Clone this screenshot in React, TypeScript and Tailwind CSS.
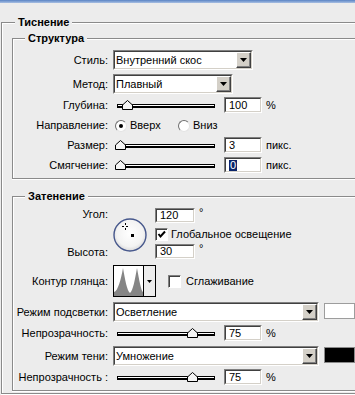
import React from 'react';

// Диалог "Стиль слоя" -> Тиснение (Photoshop, классическая тема Windows)

function Label({ children }: { children: React.ReactNode }) {
  return <div className="w-[95px] shrink-0 text-right leading-[13px] whitespace-nowrap">{children}</div>;
}

function DropButton() {
  return (
    <div className="w-[15px] h-full shrink-0 flex items-center justify-center bg-[#d4d0c8] border border-t-white border-l-white border-b-[#404040] border-r-[#404040] shadow-[inset_-1px_-1px_0_#808080]">
      <svg width="7" height="4" viewBox="0 0 7 4">
        <polygon points="0,0 7,0 3.5,4" fill="#000" />
      </svg>
    </div>
  );
}

function Select({ value, width }: { value: string; width: string }) {
  return (
    <div className={`${width} h-[20px] shrink-0 flex border border-[#808080] border-b-white border-r-white`}>
      <div className="flex-1 flex border border-[#404040] border-b-[#d4d0c8] border-r-[#d4d0c8] bg-white">
        <span className="flex-1 pl-[1px] text-[11px] leading-[16px] whitespace-nowrap overflow-hidden">{value}</span>
        <DropButton />
      </div>
    </div>
  );
}

function Field({ value, width = 'w-[38px]', height = 'h-[16px]', selected = false }: { value: string; width?: string; height?: string; selected?: boolean }) {
  return (
    <div className={`${width} ${height} shrink-0 border border-[#808080] border-b-white border-r-white`}>
      <div className="h-full border border-[#404040] border-b-[#d4d0c8] border-r-[#d4d0c8] bg-white flex items-center pl-[3px] leading-[11px]">
        {selected ? <span className="bg-[#0a246a] text-white px-[1px]">{value}</span> : value}
      </div>
    </div>
  );
}

function Thumb({ left }: { left: number }) {
  return (
    <svg className="absolute top-[3px]" style={{ left }} width="11" height="10" viewBox="0 0 11 10">
      <path d="M5.5 0.5 L10.5 5 L10.5 9.5 L0.5 9.5 L0.5 5 Z" fill="#f4f4f4" stroke="#000" />
    </svg>
  );
}

function SliderRow({ label, thumb, value, unit, selected = false }: { label: string; thumb: number; value: string; unit: string; selected?: boolean }) {
  return (
    <div className="flex items-center gap-[5px]">
      <Label>{label}</Label>
      <div className="relative w-[106px] h-[16px] shrink-0">
        <div className="ml-[4px] mt-[7px] w-[98px] h-[4px] bg-white border border-black border-b-2" />
        <Thumb left={thumb} />
      </div>
      <Field value={value} selected={selected} />
      <span className="ml-[-1px] leading-[13px]">{unit}</span>
    </div>
  );
}

function Radio({ checked }: { checked?: boolean }) {
  return (
    <div className="w-[12px] h-[12px] shrink-0 rounded-full bg-white border border-[#6f6f6f] border-r-[#e4e4e4] border-b-[#e4e4e4] flex items-center justify-center">
      {checked && <div className="w-[4px] h-[4px] rounded-full bg-black" />}
    </div>
  );
}

function Checkbox({ checked }: { checked?: boolean }) {
  return (
    <div className="w-[13px] h-[13px] shrink-0 bg-white border border-[#808080] border-b-white border-r-white shadow-[inset_1px_1px_0_#404040]">
      {checked && (
        <svg width="11" height="11" viewBox="0 0 11 11">
          <polyline points="2.5,5 4.5,7.5 9,2.5" fill="none" stroke="#000" strokeWidth="2" />
        </svg>
      )}
    </div>
  );
}

function Dial() {
  return (
    <svg className="mt-[10px] shrink-0" width="34" height="34" viewBox="0 0 34 34">
      <defs>
        <radialGradient id="dialFill" cx="50%" cy="45%" r="55%">
          <stop offset="0%" stopColor="#ffffff" />
          <stop offset="75%" stopColor="#f3f3f3" />
          <stop offset="100%" stopColor="#d9d9d9" />
        </radialGradient>
      </defs>
      <circle cx="17" cy="17" r="16" fill="url(#dialFill)" stroke="#46578c" strokeWidth="1.4" />
      <g stroke="#000" strokeWidth="1">
        <line x1="9" y1="8.5" x2="11" y2="8.5" />
        <line x1="13" y1="8.5" x2="15" y2="8.5" />
        <line x1="12.5" y1="5" x2="12.5" y2="7" />
        <line x1="12.5" y1="10" x2="12.5" y2="12" />
      </g>
      <rect x="18" y="16" width="3" height="3" fill="#000" />
    </svg>
  );
}

function Contour() {
  return (
    <div className="w-[43px] h-[32px] shrink-0 flex border border-black">
      <svg className="bg-white border-r border-black" width="30" height="30" viewBox="0 0 29 30">
        <path
          d="M0 30 L0 26 C4 25 7 13 9 2 C11 13 13 25 16 27 C19 25 21 13 23 2 C25 13 27 25 29 26 L29 30 Z"
          fill="#858585"
        />
      </svg>
      <div className="flex-1 flex items-center justify-center">
        <svg width="5" height="3" viewBox="0 0 5 3">
          <polygon points="0,0 5,0 2.5,3" fill="#000" />
        </svg>
      </div>
    </div>
  );
}

const boxLine = 'border-l border-t border-b border-[#8a8a8a] shadow-[inset_1px_1px_0_#ffffff,0_1px_0_#ffffff]';

export default function App() {
  return (
    <div className="w-[355px] h-[395px] overflow-hidden bg-[#ececec] text-[11px] text-black font-['Liberation_Sans',Arial,sans-serif]">
      <div className="h-[3px] bg-linear-to-b from-[#5a83c4] to-[#a9c0e2]" />

      <fieldset className={`mt-[13px] ml-[1px] w-[420px] pb-[2px] ${boxLine}`}>
        <legend className="ml-[13px] px-[3px] font-bold leading-[13px] bg-[#ececec]">Тиснение</legend>

        {/* Структура */}
        <fieldset className={`mt-[3px] ml-[10px] pb-[5px] ${boxLine}`}>
          <legend className="ml-[12px] px-[3px] font-bold leading-[13px] bg-[#ececec]">Структура</legend>

          <div className="mt-[5px] flex items-center gap-[5px]">
            <Label>Стиль:</Label>
            <Select value="Внутренний скос" width="w-[140px]" />
          </div>
          <div className="mt-[4px] flex items-center gap-[5px]">
            <Label>Метод:</Label>
            <Select value="Плавный" width="w-[120px]" />
          </div>
          <div className="mt-[3px]">
            <SliderRow label="Глубина:" thumb={9} value="100" unit="%" />
          </div>
          <div className="mt-[6px] flex items-center gap-[5px] h-[13px]">
            <Label>Направление:</Label>
            <div className="flex items-center w-[60px]">
              <div className="ml-[2px]"><Radio checked /></div>
              <span className="ml-[3px] leading-[13px]">Вверх</span>
            </div>
            <div className="flex items-center">
              <Radio />
              <span className="ml-[3px] leading-[13px]">Вниз</span>
            </div>
          </div>
          <div className="mt-[5px]">
            <SliderRow label="Размер:" thumb={2} value="3" unit="пикс." />
          </div>
          <div className="mt-[4px]">
            <SliderRow label="Смягчение:" thumb={2} value="0" unit="пикс." selected />
          </div>
        </fieldset>

        {/* Затенение */}
        <fieldset className={`mt-[11px] ml-[10px] pb-[5px] ${boxLine}`}>
          <legend className="ml-[12px] px-[3px] font-bold leading-[13px] bg-[#ececec]">Затенение</legend>

          <div className="mt-[5px] flex gap-[5px]">
            <div className="w-[95px] h-[51px] shrink-0 flex flex-col justify-between text-right leading-[13px]">
              <span>Угол:</span>
              <span>Высота:</span>
            </div>
            <Dial />
            <div className="ml-[3px] flex flex-col">
              <div className="flex items-start">
                <Field value="120" width="w-[40px]" height="h-[15px]" />
                <span className="ml-[4px] leading-[9px]">°</span>
              </div>
              <div className="mt-[5px] flex items-center">
                <Checkbox checked />
                <span className="ml-[3px] leading-[13px]">Глобальное освещение</span>
              </div>
              <div className="mt-[3px] flex items-start">
                <Field value="30" width="w-[40px]" height="h-[15px]" />
                <span className="ml-[4px] leading-[9px]">°</span>
              </div>
            </div>
          </div>

          <div className="mt-[6px] flex items-center gap-[5px]">
            <Label>Контур глянца:</Label>
            <Contour />
            <div className="ml-[7px]"><Checkbox /></div>
            <span className="leading-[13px]">Сглаживание</span>
          </div>

          <div className="mt-[5px] flex items-start gap-[5px]">
            <div className="h-[20px] flex items-center"><Label>Режим подсветки:</Label></div>
            <Select value="Осветление" width="w-[206px]" />
            <div className="mt-[1px] w-[31px] h-[16px] bg-white border border-[#9d9d9d]" />
          </div>
          <div className="mt-[3px]">
            <SliderRow label="Непрозрачность:" thumb={74} value="75" unit="%" />
          </div>
          <div className="mt-[5px] flex items-start gap-[5px]">
            <div className="h-[20px] flex items-center"><Label>Режим тени:</Label></div>
            <Select value="Умножение" width="w-[206px]" />
            <div className="mt-[1px] w-[31px] h-[16px] bg-black border border-[#8a8a8a]" />
          </div>
          <div className="mt-[3px]">
            <SliderRow label="Непрозрачность :" thumb={74} value="75" unit="%" />
          </div>
        </fieldset>
      </fieldset>
    </div>
  );
}
